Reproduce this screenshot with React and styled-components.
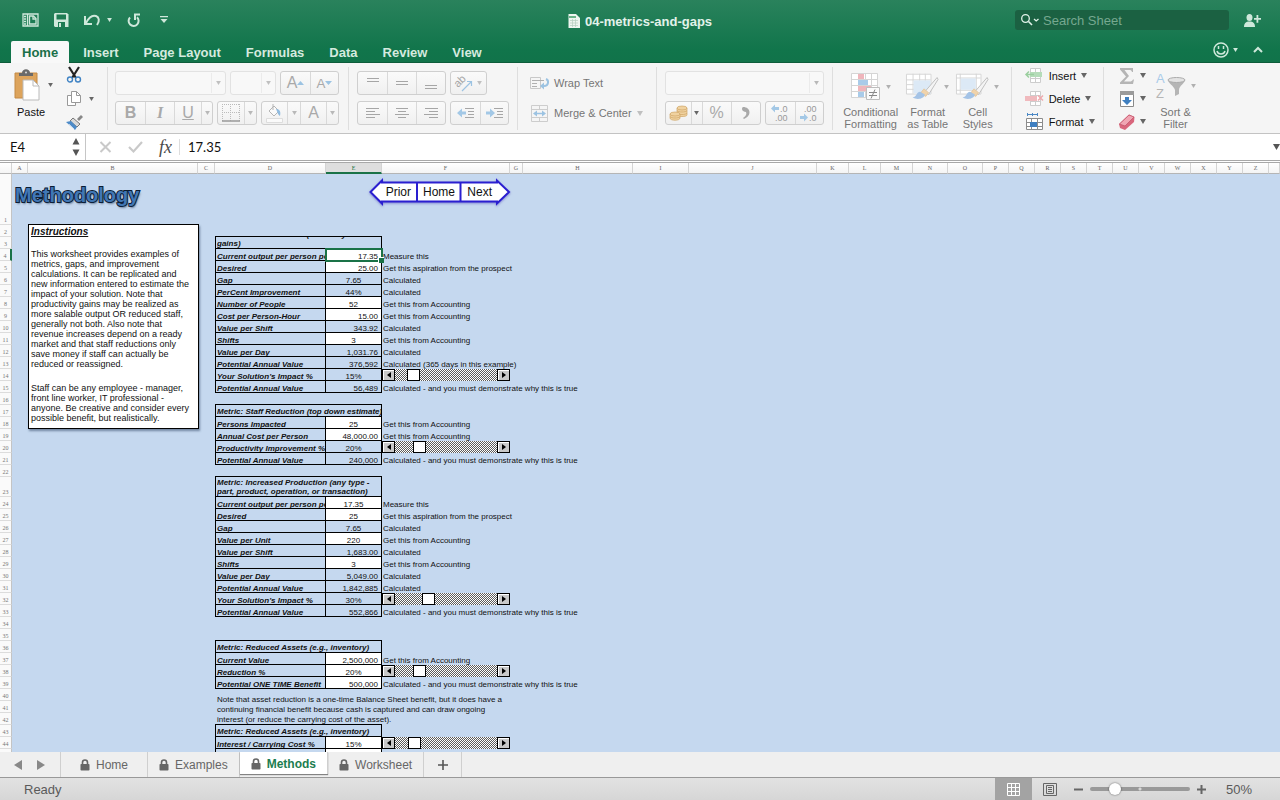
import { useState } from "react";
import styled, { createGlobalStyle } from "styled-components";

const GlobalStyle = createGlobalStyle`
  * {
    box-sizing: border-box;
  }
  body {
    margin: 0;
    font-family: "Liberation Sans", Arial, sans-serif;
  }
  button,
  input,
  select {
    font-family: inherit;
    margin: 0;
    padding: 0;
    border: none;
    background: none;
    color: inherit;
    outline: none;
  }
  svg {
    display: block;
    flex: none;
    overflow: visible;
  }
`;
const Window = styled.div`
  height: 100vh;
  display: flex;
  flex-direction: column;
  overflow: hidden;
`;

/* title bar and ribbon tabs */
const Top = styled.header`
  height: 63px;
  flex: none;
  background: linear-gradient(#2a825c, #11754b 80%, #11734a);
  border-bottom: 1px solid #0d5c3a;
  color: #d5eadf;
`;
const TitleBar = styled.div`
  height: 40px;
  display: grid;
  grid-template-columns: 1fr auto 1fr;
  align-items: center;
`;
const QuickTools = styled.div`
  display: flex;
  align-items: center;
  padding-left: 22px;
  button {
    display: flex;
    align-items: center;
    gap: 7px;
    margin-right: 15px;
  }
`;
const Title = styled.div`
  display: flex;
  align-items: center;
  gap: 5px;
  padding-top: 2px;
  font-size: 13px;
  font-weight: bold;
  color: #e3f2ea;
`;
const TitleRight = styled.div`
  display: flex;
  justify-content: flex-end;
  align-items: center;
  gap: 15px;
  padding-right: 18px;
`;
const Search = styled.label`
  width: 214px;
  height: 20px;
  display: flex;
  align-items: center;
  gap: 4px;
  padding-left: 6px;
  border-radius: 3px;
  background-color: #1b6142;
  input {
    flex: 1;
    min-width: 0;
    font-size: 13px;
  }
  input::placeholder {
    color: #76a890;
    opacity: 1;
  }
`;
const TabRow = styled.nav`
  height: 23px;
  display: flex;
  align-items: flex-end;
  gap: 3px;
  padding: 0 17px 0 11px;
`;
const Tab = styled.button`
  height: 22px;
  padding: 0 11px;
  border-radius: 2px 2px 0 0;
  background: ${(props) => (props.$active ? "#f8f8f8" : "none")};
  color: ${(props) => (props.$active ? "#1b7049" : "#d5eadf")};
  font-size: 13px;
  font-weight: bold;
`;
const TabTools = styled.div`
  margin-left: auto;
  height: 100%;
  display: flex;
  align-items: center;
  gap: 15px;
  padding-bottom: 4px;
  button {
    display: flex;
    align-items: center;
    gap: 4px;
  }
`;

/* ribbon */
const Ribbon = styled.div`
  height: 71px;
  flex: none;
  display: flex;
  padding: 4px 0 3px;
  background-color: #f5f5f5;
  border-bottom: 1px solid #c3c3c3;
  font-size: 11px;
  color: #767676;
`;
const Group = styled.div`
  height: 63px;
  flex: none;
  display: flex;
  padding: ${(props) => props.$pad || "0 8px"};
  gap: ${(props) => props.$gap || 0}px;
  border-right: ${(props) => (props.$last ? "none" : "1px solid #dedede")};
`;
const Stack = styled.div`
  display: flex;
  flex-direction: column;
  padding-top: 4px;
  gap: 6px;
`;
const Line = styled.div`
  display: flex;
  gap: 4px;
`;
const Combo = styled.label`
  width: ${(props) => props.$width}px;
  height: 24px;
  display: flex;
  align-items: center;
  border: 1px solid #e2e2e2;
  border-radius: 3px;
  background-color: #f8f8f8;
  select {
    flex: 1;
    min-width: 0;
    height: 100%;
    appearance: none;
  }
  span {
    width: 14px;
    height: 20px;
    display: flex;
    align-items: center;
    justify-content: center;
    border-left: 1px solid #ebebeb;
  }
`;
const Buttons = styled.div`
  height: 24px;
  display: flex;
  border: 1px solid #cfcfcf;
  border-radius: 3px;
  background: linear-gradient(#fafafa, #f0f0f0);
`;
const Tool = styled.button`
  width: ${(props) => props.$width || 29}px;
  display: flex;
  align-items: center;
  justify-content: center;
  gap: ${(props) => props.$gap || 0}px;
  font-size: 16px;
  font-weight: ${(props) => (props.$plain ? "normal" : "bold")};
  font-style: ${(props) => (props.$italic ? "italic" : "normal")};
  font-family: ${(props) =>
    props.$italic ? '"Liberation Serif", serif' : "inherit"};
  text-decoration: ${(props) => (props.$underline ? "underline" : "none")};
  color: #a9a9a9;
  & + & {
    border-left: 1px solid #d9d9d9;
  }
`;
const BigTool = styled.button`
  width: ${(props) => props.$width}px;
  display: flex;
  flex-direction: column;
  align-items: center;
  justify-content: space-between;
  padding-top: 5px;
  font-size: 11px;
  line-height: 12px;
  color: ${(props) => (props.$enabled ? "#111" : "#767676")};
  div {
    display: flex;
    align-items: center;
    gap: 5px;
  }
`;
const PasteTool = styled(BigTool)`
  align-items: flex-start;
  justify-content: flex-start;
  gap: 6px;
  padding-top: 2px;
  > span {
    padding-left: 3px;
  }
  div {
    gap: 8px;
  }
`;
const SmallTools = styled.div`
  display: flex;
  flex-direction: column;
  justify-content: space-between;
  align-items: flex-start;
`;
const TextTool = styled.button`
  height: ${(props) => props.$height || 17}px;
  display: flex;
  align-items: center;
  gap: ${(props) => props.$gap || 5}px;
  font-size: 11px;
  color: ${(props) => (props.$enabled ? "#111" : "#767676")};
`;

/* formula bar */
const FormulaBar = styled.div`
  height: 29px;
  flex: none;
  display: flex;
  align-items: center;
  background-color: #fff;
  border-bottom: 3px double #a8a8a8;
  font-family: Lato, sans-serif;
  input {
    min-width: 0;
    font-size: 13px;
    color: #111;
  }
`;
const NameBox = styled.div`
  width: 86px;
  height: 100%;
  display: flex;
  align-items: center;
  padding: 0 5px 0 10px;
  border-right: 1px solid #c6c6c6;
  input {
    flex: 1;
  }
`;
const FormulaTools = styled.div`
  display: flex;
  align-items: center;
  gap: 16px;
  padding: 0 7px 0 13px;
  margin-right: 8px;
  border-right: 1px solid #ddd;
  i {
    font-family: "Liberation Serif", serif;
    font-size: 18px;
    line-height: 16px;
    color: #4a4a4a;
  }
`;
const Formula = styled.input`
  flex: 1;
`;

/* sheet */
const Sheet = styled.main`
  position: relative;
  flex: 1;
  min-height: 0;
  overflow: hidden;
  background-color: #c5d8ef;
`;
const Grid = styled.table`
  width: 100%;
  table-layout: fixed;
  border-collapse: separate;
  border-spacing: 0;
  font-size: 8px;
  line-height: 8px;
  color: #111;
  td,
  th {
    padding: 0;
  }
`;
const ColHead = styled.th`
  height: 11px;
  overflow: hidden;
  font: 6px/8px "Liberation Serif", serif;
  color: ${(props) => (props.$active ? "#1a7247" : "#666")};
  background: ${(props) =>
    props.$active ? "#dedede" : "linear-gradient(#fff, #f4f4f4)"};
  border-right: 1px solid #d4d4d4;
  border-bottom: ${(props) =>
    props.$active ? "2px solid #1a7247" : "1px solid #b5b5b5"};
`;
const RowHead = styled.th`
  height: ${(props) => props.$height}px;
  vertical-align: bottom;
  text-align: center;
  font: 6px/8px "Liberation Serif", serif;
  color: #777;
  background-color: #fafafa;
  border-right: ${(props) =>
    props.$active ? "2px solid #1a7247" : "1px solid #c4c4c4"};
  border-bottom: 1px solid #dcdcdc;
`;
const HeadCell = styled.td`
  padding-left: 1px !important;
  vertical-align: bottom;
  border: 1px solid #000;
  border-top: none;
  box-shadow: 0 -1px 0 #000;
  font-weight: bold;
  font-style: italic;
  div {
    height: ${(props) => props.$height}px;
    display: flex;
    flex-direction: column;
    justify-content: flex-end;
    overflow: hidden;
    white-space: nowrap;
    line-height: 9px;
  }
`;
const LabelCell = styled.td`
  border: 1px solid #000;
  border-top: none;
  font-weight: bold;
  font-style: italic;
  div {
    height: 11px;
    padding: 4px 0 0 1px;
    overflow: hidden;
    white-space: nowrap;
  }
`;
const ValueCell = styled.td`
  position: relative;
  border-right: 1px solid #000;
  border-bottom: 1px solid #000;
  background-color: ${(props) => (props.$input ? "#fff" : "transparent")};
  text-align: ${(props) => (props.$right ? "right" : "center")};
  div {
    height: 11px;
    padding: 4px 3px 0;
    white-space: nowrap;
  }
  ${(props) =>
    props.$selected &&
    `
    z-index: 1;
    outline: 2px solid #1a7247;
    outline-offset: -1px;
    &::after {
      content: "";
      position: absolute;
      right: -3px;
      bottom: -3px;
      width: 5px;
      height: 5px;
      background-color: #1a7247;
      border: solid #fff;
      border-width: 1px 0 0 1px;
    }
  `}
`;
const NoteCell = styled.td`
  vertical-align: top;
  white-space: nowrap;
  div {
    height: 11px;
    padding: 4px 0 0 1px;
  }
`;
const MemoCell = styled.td`
  padding-left: 2px !important;
  vertical-align: bottom;
  line-height: 10px;
  white-space: nowrap;
`;
const Spinner = styled.span`
  height: 12px;
  display: flex;
  background-color: #fff;
  button {
    width: 13px;
    display: flex;
    align-items: center;
    justify-content: center;
    border: 1px solid #000;
    background-color: #c9c9c9;
    box-shadow: inset 1px 1px 0 #fff;
  }
  input {
    flex: 1;
    min-width: 0;
    height: 12px;
    appearance: none;
    background: repeating-conic-gradient(#5c5c5c 0 25%, #fff 0 50%) 0 0 / 2px
      2px;
  }
  input::-webkit-slider-thumb {
    appearance: none;
    width: 13px;
    height: 12px;
    border: 1px solid #000;
    background-color: #fff;
  }
`;

/* objects floating over the cells */
const WordArt = styled.h1`
  position: absolute;
  left: 15px;
  top: 20px;
  margin: 0;
  font-size: 20px;
  line-height: 24px;
  color: #4177b5;
  -webkit-text-stroke: 2px #0b1c33;
  paint-order: stroke fill;
  text-shadow: 1px 2px 2px rgba(20, 40, 70, 0.5);
`;
const Arrows = styled.nav`
  position: absolute;
  left: 369px;
  top: 15px;
  width: 142px;
  height: 28px;
  display: flex;
  align-items: center;
  padding: 0 11px 0 9px;
  svg {
    position: absolute;
    left: 0;
    top: 0;
    filter: drop-shadow(0 1px 1px rgba(60, 50, 180, 0.5));
  }
  a {
    position: relative;
    flex: 1;
    text-align: center;
    font-size: 12px;
    color: #111;
    text-decoration: none;
  }
`;
const Instructions = styled.section`
  position: absolute;
  left: 28px;
  top: 61px;
  width: 171px;
  height: 205px;
  padding: 2px;
  border: 1px solid #000;
  background-color: #fff;
  box-shadow: 1px 2px 2px rgba(60, 80, 110, 0.6);
  font-size: 9px;
  line-height: 10px;
  color: #111;
  white-space: nowrap;
  h2 {
    margin: 0 0 12px;
    font-size: 10px;
    line-height: 10px;
    font-style: italic;
    text-decoration: underline;
  }
  p {
    margin: 0 0 14px;
  }
`;

/* sheet tabs and status bar */
const SheetTabs = styled.nav`
  height: 25px;
  flex: none;
  display: flex;
  background-color: #efefef;
`;
const Step = styled.div`
  width: 61px;
  display: flex;
  align-items: center;
  gap: 15px;
  padding-left: 14px;
  border-right: 1px solid #cfcfcf;
`;
const SheetTab = styled.button`
  min-width: 87px;
  height: ${(props) => (props.$active ? 22 : 25)}px;
  display: flex;
  align-items: center;
  justify-content: center;
  gap: 6px;
  padding: 0 11px;
  padding-top: ${(props) => (props.$active ? 2 : 0)}px;
  border-right: 1px solid #cfcfcf;
  background: ${(props) => (props.$active ? "#fff" : "none")};
  box-shadow: ${(props) =>
    props.$active ? "0 1px 1px rgba(0, 0, 0, 0.45)" : "none"};
  font-size: 12px;
  font-weight: ${(props) => (props.$active ? "bold" : "normal")};
  color: ${(props) => (props.$active ? "#1c7d50" : "#666")};
`;
const AddTab = styled.button`
  width: 38px;
  display: flex;
  align-items: center;
  justify-content: center;
  border-right: 1px solid #cfcfcf;
`;
const StatusBar = styled.footer`
  height: 23px;
  flex: none;
  display: flex;
  align-items: center;
  padding: 0 28px 0 24px;
  border-top: 1px solid #999;
  background: linear-gradient(#e2e2e2, #d6d6d6);
  font-size: 13px;
  color: #5a5a5a;
`;
const Status = styled.span`
  flex: 1;
`;
const ViewButton = styled.button`
  width: 37px;
  height: 100%;
  display: flex;
  align-items: center;
  justify-content: center;
  background-color: ${(props) => (props.$active ? "#a3a3a3" : "transparent")};
`;
const Zoom = styled.div`
  display: flex;
  align-items: center;
  gap: 7px;
  margin: 0 20px 0 5px;
  input {
    width: 100px;
    height: 14px;
    appearance: none;
  }
  input::-webkit-slider-runnable-track {
    height: 4px;
    border-radius: 2px;
    background: radial-gradient(circle, #d8d8d8 1px, #999 2px);
  }
  input::-webkit-slider-thumb {
    appearance: none;
    width: 12px;
    height: 12px;
    margin-top: -4px;
    border-radius: 50%;
    background-color: #fff;
    box-shadow: 0 0 2px rgba(0, 0, 0, 0.6);
  }
`;

const columns = [
  ["A", 16],
  ["B", 170],
  ["C", 17],
  ["D", 111],
  ["E", 56],
  ["F", 128],
  ["G", 13],
  ["H", 110],
  ["I", 56],
  ["J", 128],
  ["K", 32],
  ["L", 32],
  ["M", 32],
  ["N", 35],
  ["O", 35],
  ..."PQRSTUVWXYZ".split("").map((letter) => [letter, 26]),
];

const WHY = "Calculated - and you must demonstrate why this is true";
const ACC = "Get this from Accounting";
const ASP = "Get this aspiration from the prospect";
const CALC = "Calculated";

// [label, value, note, flags]  i = input cell, r = right aligned, s = spinner
const rows = {
  3: { head: ["Metric: Cost Reduction (efficiency", "gains)"] },
  4: ["Current output per person per", "17.35", "Measure this", "ir"],
  5: ["Desired", "25.00", ASP, "ir"],
  6: ["Gap", "7.65", CALC, ""],
  7: ["PerCent Improvement", "44%", CALC, ""],
  8: ["Number of People", "52", ACC, "i"],
  9: ["Cost per Person-Hour", "15.00", ACC, "ir"],
  10: ["Value per Shift", "343.92", CALC, "r"],
  11: ["Shifts", "3", ACC, "i"],
  12: ["Value per Day", "1,031.76", CALC, "r"],
  13: [
    "Potential Annual Value",
    "376,592",
    "Calculated (365 days in this example)",
    "r",
  ],
  14: ["Your Solution's Impact %", "15%", 14, "s"],
  15: ["Potential Annual Value", "56,489", WHY, "r"],
  17: { head: ["Metric: Staff Reduction (top down estimate)"] },
  18: ["Persons Impacted", "25", ACC, "i"],
  19: ["Annual Cost per Person", "48,000.00", ACC, "ir"],
  20: ["Productivity Improvement %", "20%", 20, "s"],
  21: ["Potential Annual Value", "240,000", WHY, "r"],
  23: {
    head: [
      "Metric: Increased Production (any type -",
      "part, product, operation, or transaction)",
    ],
  },
  24: ["Current output per person per", "17.35", "Measure this", "i"],
  25: ["Desired", "25", ASP, "i"],
  26: ["Gap", "7.65", CALC, ""],
  27: ["Value per Unit", "220", ACC, "i"],
  28: ["Value per Shift", "1,683.00", CALC, "r"],
  29: ["Shifts", "3", ACC, "i"],
  30: ["Value per Day", "5,049.00", CALC, "r"],
  31: ["Potential Annual Value", "1,842,885", CALC, "r"],
  32: ["Your Solution's Impact %", "30%", 30, "s"],
  33: ["Potential Annual Value", "552,866", WHY, "r"],
  36: { head: ["Metric: Reduced Assets (e.g., inventory)"] },
  37: ["Current Value", "2,500,000", ACC, "ir"],
  38: ["Reduction %", "20%", 20, "is"],
  39: ["Potential ONE TIME Benefit", "500,000", WHY, "ir"],
  43: { head: ["Metric: Reduced Assets (e.g., inventory)"] },
  44: ["Interest / Carrying Cost %", "15%", 15, "is"],
  45: ["", "", "", "i"],
};
const rowHeights = { 1: 51, 23: 20 };

const Caret = ({ color = "#666", size = 6 }) => (
  <svg width={size} height={size - 1} viewBox="0 0 6 5">
    <path d="M0 0h6L3 5z" fill={color} />
  </svg>
);

const Lines = ({ rows: spec }) => (
  <svg width="16" height="16" viewBox="0 0 16 16">
    {spec.map(([x, y, w], i) => (
      <path key={i} d={`M${x} ${y}.5h${w}`} stroke="#a6a6a6" />
    ))}
  </svg>
);

const Indent = ({ flip }) => (
  <svg width="18" height="14" viewBox="0 0 18 14">
    <path
      d="M8 2.500h9M11 5.500h6M11 8.500h6M8 11.500h9"
      stroke="#a6a6a6"
    />
    <path
      d={flip ? "M9 7L4 2.500v3H0v3h4v3z" : "M0 7l5-4.500v3h4v3H5v3z"}
      fill="#a3c8e6"
    />
  </svg>
);

const Lock = () => (
  <svg width="10" height="12" viewBox="0 0 10 12">
    <path d="M2.500 6V3.500a2.500 2.500 0 0 1 5 0V6" fill="none" stroke="#666" strokeWidth="1.600" />
    <rect x="0.500" y="5" width="9" height="6.500" rx="0.800" fill="#666" />
  </svg>
);

const Brush = () => (
  <g>
    <path d="M33 5L20 20l4 3L34 7z" fill="#f4f4f4" stroke="#bdbdbd" />
    <path d="M19 17l5 4-3 4-6-3z" fill="#f0d3ab" stroke="#dcb98c" strokeWidth="0.600" />
    <path d="M15 20c-4 0-3 5-8 6 4 3 12 2 13-3z" fill="#a4c3e6" />
  </g>
);

const CellIcon = ({ kind }) => (
  <svg width="19" height="17" viewBox="0 0 19 17">
    {kind === "format" ? (
      <g>
        <path d="M1.500 5.500h16v11h-16zM6.500 5v11M12.500 5v11M1 9.500h16M1 13.500h16" fill="#fff" stroke="#8c8c8c" />
        <path d="M5 9h7v5H5z" fill="#3f7fc0" />
        <path d="M2 1.500h10M2.500 0v3M7.500 0v3M12.500 0v3" stroke="#4b88c5" />
      </g>
    ) : (
      <g>
        <path d="M5.500 1.500h10v14h-10zM10.500 1v14M5 5.500h10M5 11.500h10" fill="#fff" stroke="#cdcdcd" />
        <path
          d={kind === "insert" ? "M5 5h12v5H5z" : "M0 6h12v5H0z"}
          fill={kind === "insert" ? "#b5dcb9" : "#f0b9bd"}
        />
        <path
          d={kind === "insert" ? "M9 7.500H1M4 4.500l-3 3 3 3" : "M13 5.500l5 5M18 5.500l-5 5"}
          fill="none"
          stroke={kind === "insert" ? "#9bcf9f" : "#efa9ae"}
          strokeWidth="1.500"
        />
      </g>
    )}
  </svg>
);

function Scroll({ start, label }) {
  const [value, setValue] = useState(start);
  return (
    <Spinner>
      <button aria-label="Decrease" onClick={() => setValue(value - 1)}>
        <svg width="4" height="6" viewBox="0 0 4 6">
          <path d="M4 0v6L0 3z" />
        </svg>
      </button>
      <input
        type="range"
        aria-label={label}
        value={value}
        onChange={(e) => setValue(Number(e.target.value))}
      />
      <button aria-label="Increase" onClick={() => setValue(value + 1)}>
        <svg width="4" height="6" viewBox="0 0 4 6">
          <path d="M0 0v6l4-3z" />
        </svg>
      </button>
    </Spinner>
  );
}

function Row({ number }) {
  const row = rows[number];
  const height = rowHeights[number] || 12;
  const renderCells = () => {
    if (number === 40) {
      return (
        <>
          <MemoCell colSpan={3} rowSpan={3}>
            Note that asset reduction is a one-time Balance Sheet benefit, but
            it does have a<br />
            continuing financial benefit because cash is captured and can draw
            ongoing
            <br />
            interest (or reduce the carrying cost of the asset).
          </MemoCell>
          <td colSpan={21}></td>
        </>
      );
    }
    if (number === 41 || number === 42) return <td colSpan={21}></td>;
    if (!row) return <td colSpan={24}></td>;
    if (row.head) {
      return (
        <>
          <HeadCell colSpan={2} $height={height - 1}>
            <div>
              {row.head.map((line) => (
                <span key={line}>{line}</span>
              ))}
            </div>
          </HeadCell>
          <td colSpan={22}></td>
        </>
      );
    }
    const [label, value, note, flags] = row;
    return (
      <>
        <LabelCell>
          <div>{label}</div>
        </LabelCell>
        <ValueCell
          $input={flags.includes("i")}
          $right={flags.includes("r")}
          $selected={number === 4}
        >
          <div>{value}</div>
        </ValueCell>
        <NoteCell>
          {flags.includes("s") ? (
            <Scroll start={note} label={label} />
          ) : (
            <div>{note}</div>
          )}
        </NoteCell>
        <td colSpan={21}></td>
      </>
    );
  };
  return (
    <tr>
      <RowHead $height={height} $active={number === 4}>
        {number}
      </RowHead>
      <td colSpan={3}></td>
      {renderCells()}
    </tr>
  );
}

function RibbonTools() {
  return (
    <Ribbon>
      <Group $pad="0 13px 0 14px" $gap={12}>
        <PasteTool $width={40} $enabled>
          <div>
            <svg width="26" height="31" viewBox="0 0 26 31">
              <path d="M1 4h22v25H1z" fill="#dda45c" stroke="#c48a44" />
              <path d="M5 7V4h3c0-5 8-5 8 0h3v3z" fill="#6a6a6a" />
              <circle cx="12" cy="3.500" r="1" fill="#ddd" />
              <path d="M9 11h10l6 6v14H9z" fill="#fff" stroke="#bbb" />
              <path d="M19 11v6h6" fill="none" stroke="#bbb" />
            </svg>
            <Caret size={5} />
          </div>
          <span>Paste</span>
        </PasteTool>
        <SmallTools>
          <TextTool $height={16} aria-label="Cut">
            <svg width="16" height="16" viewBox="0 0 16 16">
              <path d="M3 0l7 11M13 0L6 11" stroke="#222" strokeWidth="2.200" />
              <circle cx="4" cy="12.500" r="2.500" fill="none" stroke="#3f83c4" strokeWidth="1.400" />
              <circle cx="12" cy="12.500" r="2.500" fill="none" stroke="#3f83c4" strokeWidth="1.400" />
            </svg>
          </TextTool>
          <TextTool $height={16} $gap={7} aria-label="Copy">
            <svg width="16" height="16" viewBox="0 0 16 16">
              <path d="M1.500 4.500h8v10h-8z" fill="#fff" stroke="#999" />
              <path d="M5.500 0.500h5l4 4v7h-9z" fill="#fff" stroke="#999" />
              <path d="M10.500 0.500v4h4" fill="none" stroke="#999" />
            </svg>
            <Caret size={5} />
          </TextTool>
          <TextTool $height={16} aria-label="Format painter">
            <svg width="17" height="15" viewBox="0 0 17 15">
              <path d="M11 4l4-4 2 2-4 4z" fill="#888" />
              <path d="M7 3l7 6-3 3-7-6z" fill="#d9d9d9" stroke="#777" />
              <path d="M5 6l6 6-2 3L0 7z" fill="#4d8bc8" />
              <path d="M3 9l5 5" stroke="#fff" strokeWidth="0.600" />
            </svg>
          </TextTool>
        </SmallTools>
      </Group>

      <Group $pad="0 9px 0 7px">
        <Stack>
          <Line>
            <Combo $width={111}>
              <select aria-label="Font" />
              <span>
                <Caret color="#c0c0c0" size={5} />
              </span>
            </Combo>
            <Combo $width={46}>
              <select aria-label="Font size" />
              <span>
                <Caret color="#c0c0c0" size={5} />
              </span>
            </Combo>
            <Buttons>
              <Tool $plain $width={29}>
                A
                <svg width="7" height="4" viewBox="0 0 7 4">
                  <path d="M0 4h7L3.500 0z" fill="#9cc3e2" />
                </svg>
              </Tool>
              <Tool $plain $width={28}>
                <small>A</small>
                <svg width="7" height="4" viewBox="0 0 7 4">
                  <path d="M0 0h7L3.500 4z" fill="#9cc3e2" />
                </svg>
              </Tool>
            </Buttons>
          </Line>
          <Line>
            <Buttons>
              <Tool $width={29}>B</Tool>
              <Tool $width={29} $italic>
                I
              </Tool>
              <Tool $width={27} $plain $underline>
                U
              </Tool>
              <Tool $width={11} aria-label="Underline style">
                <Caret color="#b8b8b8" size={5} />
              </Tool>
            </Buttons>
            <Buttons>
              <Tool $width={26} aria-label="Borders">
                <svg width="18" height="18" viewBox="0 0 18 18">
                  <path
                    d="M0.500 0v17M8.500 0v17M17.500 0v17M0 0.500h18M0 8.500h18"
                    stroke="#bbb"
                    strokeDasharray="1 1"
                  />
                  <path d="M0 17h18" stroke="#999" strokeWidth="1.500" />
                </svg>
              </Tool>
              <Tool $width={12} aria-label="Border style">
                <Caret color="#b8b8b8" size={5} />
              </Tool>
            </Buttons>
            <Buttons>
              <Tool $width={25} aria-label="Fill colour">
                <svg width="17" height="19" viewBox="0 0 17 19">
                  <path d="M3 7l5-5 5 5-5 5z" fill="#fafafa" stroke="#b5b5b5" />
                  <path d="M7 0v6" stroke="#b5b5b5" />
                  <path d="M10 5c4 0 5 3 4 7-2-1-2-3-4-7z" fill="#8fbbe0" />
                  <path d="M0.500 14.500h16v4h-16z" fill="#fafafa" stroke="#ddd" />
                </svg>
              </Tool>
              <Tool $width={13} aria-label="Fill colours">
                <Caret color="#b8b8b8" size={5} />
              </Tool>
              <Tool $width={26} aria-label="Text colour" $plain>
                A
              </Tool>
              <Tool $width={12} aria-label="Text colours">
                <Caret color="#b8b8b8" size={5} />
              </Tool>
            </Buttons>
          </Line>
        </Stack>
      </Group>

      <Group $pad="0 8px">
        <Stack>
          <Line>
            <Buttons>
              <Tool aria-label="Top">
                <Lines rows={[[2, 3, 12], [2, 6, 12]]} />
              </Tool>
              <Tool aria-label="Middle">
                <Lines rows={[[2, 6, 12], [2, 9, 12]]} />
              </Tool>
              <Tool aria-label="Bottom">
                <Lines rows={[[2, 10, 12], [2, 13, 12]]} />
              </Tool>
            </Buttons>
            <Buttons>
              <Tool $width={35} $gap={4} aria-label="Orientation">
                <svg width="18" height="18" viewBox="0 0 18 18">
                  <text
                    x="2"
                    y="12"
                    fontSize="11"
                    fontWeight="normal"
                    fill="#a6a6a6"
                    transform="rotate(-45 5 12)"
                  >
                    ab
                  </text>
                  <path d="M7 17l9-9M12 7.500h4.500V12" fill="none" stroke="#9cc3e2" strokeWidth="1.200" />
                </svg>
                <Caret color="#c0c0c0" size={5} />
              </Tool>
            </Buttons>
          </Line>
          <Line>
            <Buttons>
              <Tool aria-label="Left">
                <Lines rows={[[1, 3, 13], [1, 6, 9], [1, 9, 14], [1, 12, 9]]} />
              </Tool>
              <Tool aria-label="Centre">
                <Lines rows={[[2, 3, 12], [4, 6, 8], [1, 9, 14], [4, 12, 8]]} />
              </Tool>
              <Tool aria-label="Right">
                <Lines rows={[[2, 3, 13], [6, 6, 9], [1, 9, 14], [6, 12, 9]]} />
              </Tool>
            </Buttons>
            <Buttons>
              <Tool aria-label="Outdent">
                <Indent />
              </Tool>
              <Tool $width={28} aria-label="Indent">
                <Indent flip />
              </Tool>
            </Buttons>
          </Line>
        </Stack>
      </Group>

      <Group $pad="0 13px 0 12px">
        <Stack>
          <TextTool $height={24}>
            <svg width="19" height="14" viewBox="0 0 19 14">
              <path d="M0.500 1.500h10v11h-10z" fill="none" stroke="#c8c8c8" />
              <path d="M2 4.500h12M2 7.500h5M2 10.500h5" stroke="#b0b0b0" />
              <path d="M16 3c3 1 3 7-2 7" fill="none" stroke="#9cc3e2" strokeWidth="2" />
              <path d="M10 10l4-3.500v7z" fill="#9cc3e2" />
            </svg>
            <span>Wrap Text</span>
          </TextTool>
          <TextTool $height={24}>
            <svg width="19" height="17" viewBox="0 0 19 17">
              <path d="M1.500 0.500h16v16h-16zM1 4.500h17M1 12.500h17M9.500 0v4M9.500 13v4" fill="none" stroke="#cdcdcd" />
              <path d="M5 8.500h9" stroke="#9cc3e2" strokeWidth="1.500" />
              <path d="M7 5.500v6l-4-3zM12 5.500v6l4-3z" fill="#9cc3e2" />
            </svg>
            <span>Merge &amp; Center</span>
            <Caret color="#c0c0c0" />
          </TextTool>
        </Stack>
      </Group>

      <Group $pad="0 8px">
        <Stack>
          <Line>
            <Combo $width={159}>
              <select aria-label="Number format" />
              <span>
                <Caret color="#b8b8b8" size={5} />
              </span>
            </Combo>
          </Line>
          <Line>
            <Buttons>
              <Tool $width={25} aria-label="Currency">
                <svg width="19" height="16" viewBox="0 0 19 16" fill="#f0d2a0" stroke="#cfa566" strokeWidth="0.700">
                  <path d="M8 3v7c0 2 10 2 10 0V3z" />
                  <ellipse cx="13" cy="3" rx="5" ry="2" />
                  <path d="M8 5.500c1 2 9 2 10 0M8 8c1 2 9 2 10 0" fill="none" />
                  <path d="M1 9v4c0 3 10 3 10 0V9z" />
                  <ellipse cx="6" cy="9" rx="5" ry="2" />
                  <path d="M1 11.500c1 2 9 2 10 0" fill="none" />
                </svg>
              </Tool>
              <Tool $width={11} aria-label="Currencies">
                <Caret size={5} />
              </Tool>
              <Tool $width={29} $plain>
                %
              </Tool>
              <Tool $width={29} aria-label="Comma">
                <svg width="8" height="12" viewBox="0 0 8 12">
                  <path d="M1 0c8 0 9 9 1 12l-1-1c3-2 4-4 3-6-4 0-5-4-3-5z" fill="#a9a9a9" />
                </svg>
              </Tool>
            </Buttons>
            <Buttons>
              <Tool $width={29} aria-label="Increase decimal">
                <svg width="18" height="18" viewBox="0 0 18 18" fontSize="9" fontWeight="normal">
                  <path d="M0 4.500l4-4v2.500h4v3H4v2.500z" fill="#a3c8e6" />
                  <text x="9" y="8" fill="#999">.0</text>
                  <text x="4" y="17" fill="#999">.00</text>
                </svg>
              </Tool>
              <Tool $width={28} aria-label="Decrease decimal">
                <svg width="18" height="18" viewBox="0 0 18 18" fontSize="9" fontWeight="normal">
                  <text x="4" y="8" fill="#999">.00</text>
                  <path d="M8 13.500l-4-4v2.500H0v3h4v2.500z" fill="#a3c8e6" />
                  <text x="9" y="17" fill="#999">.0</text>
                </svg>
              </Tool>
            </Buttons>
          </Line>
        </Stack>
      </Group>

      <Group $pad="0 10px 0 8px" $gap={4}>
        <BigTool $width={60}>
          <div>
            <svg width="30" height="29" viewBox="0 0 30 29">
              <path d="M0.500 1.500h26v24h-26zM7.500 1v24M14.500 1v24M20.500 1v24M0 7.500h26M0 13.500h26M0 19.500h26" fill="#fff" stroke="#d5d5d5" />
              <path d="M7 2h6v5H7zM7 14h13v5H7z" fill="#efb5bb" />
              <path d="M7 8h10v5H7zM7 20h6v5H7z" fill="#a9cbe9" />
              <path d="M15.500 15.500h13v12h-13z" fill="#fbfbfb" stroke="#bdbdbd" />
              <path d="M18 20.500h8M18 23.500h8M24 17.500l-4 9" stroke="#888" />
            </svg>
            <Caret color="#b0b0b0" size={5} />
          </div>
          <span>
            Conditional
            <br />
            Formatting
          </span>
        </BigTool>
        <BigTool $width={46}>
          <div>
            <svg width="33" height="29" viewBox="0 0 35 29">
              <path d="M0.500 1.500h26v21h-26zM7.500 1v21M14.500 1v21M20.500 1v21M0 7.500h26M0 12.500h26M0 17.500h26" fill="#fff" stroke="#d5d5d5" />
              <path d="M8 8h18v14H8z" fill="#dce9f6" />
              <Brush />
            </svg>
            <Caret color="#b0b0b0" size={5} />
          </div>
          <span>
            Format
            <br />
            as Table
          </span>
        </BigTool>
        <BigTool $width={46}>
          <div>
            <svg width="33" height="29" viewBox="0 0 35 29">
              <path d="M0.500 1.500h26v21h-26zM4.500 1v21M21.500 1v21M0 5.500h26M0 18.500h26" fill="#fff" stroke="#d5d5d5" />
              <path d="M5 6h16v12H5z" fill="#dce9f6" />
              <Brush />
            </svg>
            <Caret color="#b0b0b0" size={5} />
          </div>
          <span>
            Cell
            <br />
            Styles
          </span>
        </BigTool>
      </Group>

      <Group $pad="0 8px 0 13px">
        <SmallTools>
          <TextTool $enabled>
            <CellIcon kind="insert" />
            Insert
            <Caret />
          </TextTool>
          <TextTool $enabled>
            <CellIcon kind="delete" />
            Delete
            <Caret />
          </TextTool>
          <TextTool $enabled>
            <CellIcon kind="format" />
            Format
            <Caret />
          </TextTool>
        </SmallTools>
      </Group>

      <Group $pad="0 8px 0 15px" $gap={7} $last>
        <SmallTools>
          <TextTool aria-label="Sum">
            <svg width="16" height="16" viewBox="0 0 16 16">
              <path d="M1 0h13v4h-1c-.5-1.500-1-2-3-2H5.500L10 8l-5 5.500h5.500c2 0 2.500-.5 3.500-2h1L14 16H1v-1.500L7 8.500 1 1.500z" fill="#b5b5b5" />
            </svg>
            <Caret />
          </TextTool>
          <TextTool aria-label="Fill">
            <svg width="16" height="16" viewBox="0 0 16 16">
              <path d="M1.500 0.500h13v15h-13z" fill="#fff" stroke="#8a8a8a" />
              <path d="M1 0h14v4H1z" fill="#9b9b9b" />
              <path d="M8 14l-5-5h3V6h4v3h3z" fill="#3f7fc0" />
            </svg>
            <Caret />
          </TextTool>
          <TextTool aria-label="Clear">
            <svg width="16" height="16" viewBox="0 0 16 16">
              <path d="M0 10L10 0.500 15.500 3 15 8 6 16l-5-2z" fill="#d9667c" />
              <path d="M0.500 10L10 1l5 2-9 9z" fill="#f0a5b3" stroke="#c04f66" strokeWidth="0.700" />
            </svg>
            <Caret />
          </TextTool>
        </SmallTools>
        <BigTool $width={46}>
          <div>
            <svg width="31" height="28" viewBox="0 0 31 28" fontSize="13">
              <text x="1" y="11" fill="#a9cbe9">A</text>
              <text x="1" y="26" fill="#b5b5b5">Z</text>
              <path d="M13 8c0 3 6 6 7 10v6l4-2v-4c0-4 6-7 6-10z" fill="#b5b5b5" />
              <ellipse cx="21.500" cy="8" rx="8.500" ry="2.500" fill="#e3e3e3" stroke="#ababab" />
            </svg>
            <Caret color="#b0b0b0" size={5} />
          </div>
          <span>
            Sort &amp;
            <br />
            Filter
          </span>
        </BigTool>
      </Group>
    </Ribbon>
  );
}

function App() {
  const [name, setName] = useState("E4");
  const [formula, setFormula] = useState("17.35");
  const [zoom, setZoom] = useState(50);
  const tabs = "Home,Insert,Page Layout,Formulas,Data,Review,View".split(",");
  const numbers = Array.from({ length: 45 }, (_, i) => i + 1);
  return (
    <Window>
      <GlobalStyle />
      <Top>
        <TitleBar>
          <QuickTools>
            <button aria-label="Templates">
              <svg width="17" height="14" viewBox="0 0 17 14" fill="none" stroke="#cfe8db" strokeWidth="1.300">
                <path d="M1 1h15v12H1zM5.500 1v12M2 3.500h2M2 6h2M2 8.500h2M2 11h2" />
                <path d="M7.500 3h4l2.500 2.500V11H7.500z" />
                <path d="M11 3v3h3" />
              </svg>
            </button>
            <button aria-label="Save">
              <svg width="15" height="14" viewBox="0 0 15 14">
                <path d="M1 0h12l1.500 1.500V14H1L0 13V1z" fill="#cfe8db" />
                <path d="M2.500 1.500h9.500v5H2.500zM4 9h7v5H4z" fill="#1e7b53" />
                <path d="M5 10h2v4H5z" fill="#cfe8db" />
              </svg>
            </button>
            <button aria-label="Undo">
              <svg width="16" height="12" viewBox="0 0 16 12" fill="none" stroke="#cfe8db" strokeWidth="2">
                <path d="M2 9c3-6 7-8 10-7s4 5 1 9" />
                <path d="M1 2v8h7" />
              </svg>
              <Caret color="#cfe8db" size={5} />
            </button>
            <button aria-label="Redo">
              <svg width="14" height="14" viewBox="0 0 14 14" fill="none" stroke="#cfe8db" strokeWidth="2">
                <path d="M3 4.500a5 5 0 1 0 7-.2" />
                <path d="M13 1.500H8V7" />
              </svg>
            </button>
            <button aria-label="Customise">
              <svg width="14" height="8" viewBox="0 0 14 8" fill="#cfe8db">
                <path d="M4 0h8v1.300H4zM4.500 3h7L8 7z" />
              </svg>
            </button>
          </QuickTools>
          <Title>
            <svg width="12" height="14" viewBox="0 0 12 14">
              <path d="M0.500 0H8l4 4v10H0.500z" fill="#eef5f0" />
              <path d="M1 2h7v2H1z" fill="#6bb288" />
              <path d="M2 6.500h8M2 9h8M2 11.500h8M4.500 5v8M7.500 5v8" stroke="#b5cdbf" strokeWidth="0.700" />
            </svg>
            04-metrics-and-gaps
          </Title>
          <TitleRight>
            <Search>
              <svg width="18" height="12" viewBox="0 0 18 12" fill="none" stroke="#e3f2ea">
                <circle cx="4.500" cy="4.500" r="3.800" strokeWidth="1.300" />
                <path d="M7.500 7.500L11 11" strokeWidth="1.600" />
                <path d="M13 5l2.200 2L17.500 5" strokeWidth="1.300" />
              </svg>
              <input placeholder="Search Sheet" aria-label="Search Sheet" />
            </Search>
            <button aria-label="Share">
              <svg width="18" height="13" viewBox="0 0 18 13" fill="#cfe8db">
                <ellipse cx="5.500" cy="3.500" rx="3" ry="3.500" />
                <path d="M0 13c0-4 2-5 4-5.500h3c2 .5 4 1.500 4 5.500z" />
                <path d="M12.500 1h1.800v3H17v1.800h-2.700v3h-1.800v-3H10V4h2.500z" />
              </svg>
            </button>
          </TitleRight>
        </TitleBar>
        <TabRow>
          {tabs.map((tab) => (
            <Tab key={tab} $active={tab === "Home"}>
              {tab}
            </Tab>
          ))}
          <TabTools>
            <button aria-label="Feedback">
              <svg width="16" height="16" viewBox="0 0 16 16" fill="none" stroke="#cfe8db" strokeWidth="1.500">
                <circle cx="8" cy="8" r="7" />
                <path d="M5.500 4v3M10.500 4v3M4 9c1 4 7 4 8 0" />
              </svg>
              <Caret color="#cfe8db" size={5} />
            </button>
            <button aria-label="Collapse">
              <svg width="10" height="6" viewBox="0 0 10 6">
                <path d="M1 5l4-4 4 4" fill="none" stroke="#cfe8db" strokeWidth="2" />
              </svg>
            </button>
          </TabTools>
        </TabRow>
      </Top>

      <RibbonTools />

      <FormulaBar>
        <NameBox>
          <input
            aria-label="Cell"
            value={name}
            onChange={(e) => setName(e.target.value)}
          />
          <svg width="8" height="18" viewBox="0 0 8 18" fill="#555">
            <path d="M4 0l3.500 6.500h-7zM4 18l3.500-6.500h-7z" />
          </svg>
        </NameBox>
        <FormulaTools>
          <svg width="13" height="12" viewBox="0 0 13 12">
            <path d="M1.500 1l10 10M11.500 1l-10 10" stroke="#c9c9c9" strokeWidth="2" />
          </svg>
          <svg width="15" height="12" viewBox="0 0 15 12">
            <path d="M1 6l4.500 4.500L14 1" fill="none" stroke="#c9c9c9" strokeWidth="2.200" />
          </svg>
          <i>fx</i>
        </FormulaTools>
        <Formula
          aria-label="Formula"
          value={formula}
          onChange={(e) => setFormula(e.target.value)}
        />
        <Caret color="#555" size={7} />
      </FormulaBar>

      <Sheet>
        <Grid>
          <colgroup>
            <col width="12" />
            {columns.map(([letter, width]) => (
              <col key={letter} width={width} />
            ))}
            <col />
          </colgroup>
          <thead>
            <tr>
              <ColHead></ColHead>
              {columns.map(([letter]) => (
                <ColHead key={letter} $active={letter === "E"}>
                  {letter}
                </ColHead>
              ))}
              <ColHead></ColHead>
            </tr>
          </thead>
          <tbody>
            {numbers.map((number) => (
              <Row key={number} number={number} />
            ))}
          </tbody>
        </Grid>
        <WordArt>Methodology</WordArt>
        <Arrows>
          <svg width="142" height="28" viewBox="0 0 142 28">
            <path
              d="M1.500 14L13 2.500v2h115v-2L140 14l-12 11.500v-2H13v2zM48 4.500v19M91.500 4.500v19"
              fill="#fff"
              stroke="#2a1fd0"
              strokeWidth="2"
            />
          </svg>
          <a href="#prior">Prior</a>
          <a href="#home">Home</a>
          <a href="#next">Next</a>
        </Arrows>
        <Instructions>
          <h2>Instructions</h2>
          <p>
            This worksheet provides examples of
            <br />
            metrics, gaps, and improvement
            <br />
            calculations. It can be replicated and
            <br />
            new information entered to estimate the
            <br />
            impact of your solution. Note that
            <br />
            productivity gains may be realized as
            <br />
            more salable output OR reduced staff,
            <br />
            generally not both. Also note that
            <br />
            revenue increases depend on a ready
            <br />
            market and that staff reductions only
            <br />
            save money if staff can actually be
            <br />
            reduced or reassigned.
          </p>
          <p>
            Staff can be any employee - manager,
            <br />
            front line worker, IT professional -
            <br />
            anyone. Be creative and consider every
            <br />
            possible benefit, but realistically.
          </p>
        </Instructions>
      </Sheet>

      <SheetTabs>
        <Step>
          <button aria-label="Previous sheet">
            <svg width="8" height="10" viewBox="0 0 8 10">
              <path d="M8 0v10L0 5z" fill="#888" />
            </svg>
          </button>
          <button aria-label="Next sheet">
            <svg width="8" height="10" viewBox="0 0 8 10">
              <path d="M0 0v10l8-5z" fill="#888" />
            </svg>
          </button>
        </Step>
        {["Home", "Examples", "Methods", "Worksheet"].map((sheet) => (
          <SheetTab key={sheet} $active={sheet === "Methods"}>
            <Lock />
            {sheet}
          </SheetTab>
        ))}
        <AddTab aria-label="Add sheet">
          <svg width="10" height="10" viewBox="0 0 10 10">
            <path d="M5 0v10M0 5h10" stroke="#555" strokeWidth="1.600" />
          </svg>
        </AddTab>
      </SheetTabs>

      <StatusBar>
        <Status>Ready</Status>
        <ViewButton $active aria-label="Normal view">
          <svg width="13" height="13" viewBox="0 0 13 13">
            <path d="M0.500 0.500h12v12h-12zM4.500 0v13M8.500 0v13M0 4.500h13M0 8.500h13" fill="none" stroke="#fff" />
          </svg>
        </ViewButton>
        <ViewButton aria-label="Page layout view">
          <svg width="14" height="13" viewBox="0 0 14 13">
            <path d="M0.500 0.500h13v12h-13zM3.500 2.500h7v8h-7zM5 4.500h4M5 6.500h4M5 8.500h4" fill="none" stroke="#666" />
          </svg>
        </ViewButton>
        <Zoom>
          <svg width="9" height="9" viewBox="0 0 9 9">
            <path d="M0 4.500h9" stroke="#666" strokeWidth="2" />
          </svg>
          <input
            type="range"
            aria-label="Zoom"
            min="28"
            max="128"
            value={zoom}
            onChange={(e) => setZoom(Number(e.target.value))}
          />
          <svg width="9" height="9" viewBox="0 0 9 9">
            <path d="M0 4.500h9M4.500 0v9" stroke="#666" strokeWidth="2" />
          </svg>
        </Zoom>
        <span>{zoom}%</span>
      </StatusBar>
    </Window>
  );
}

export default App;
